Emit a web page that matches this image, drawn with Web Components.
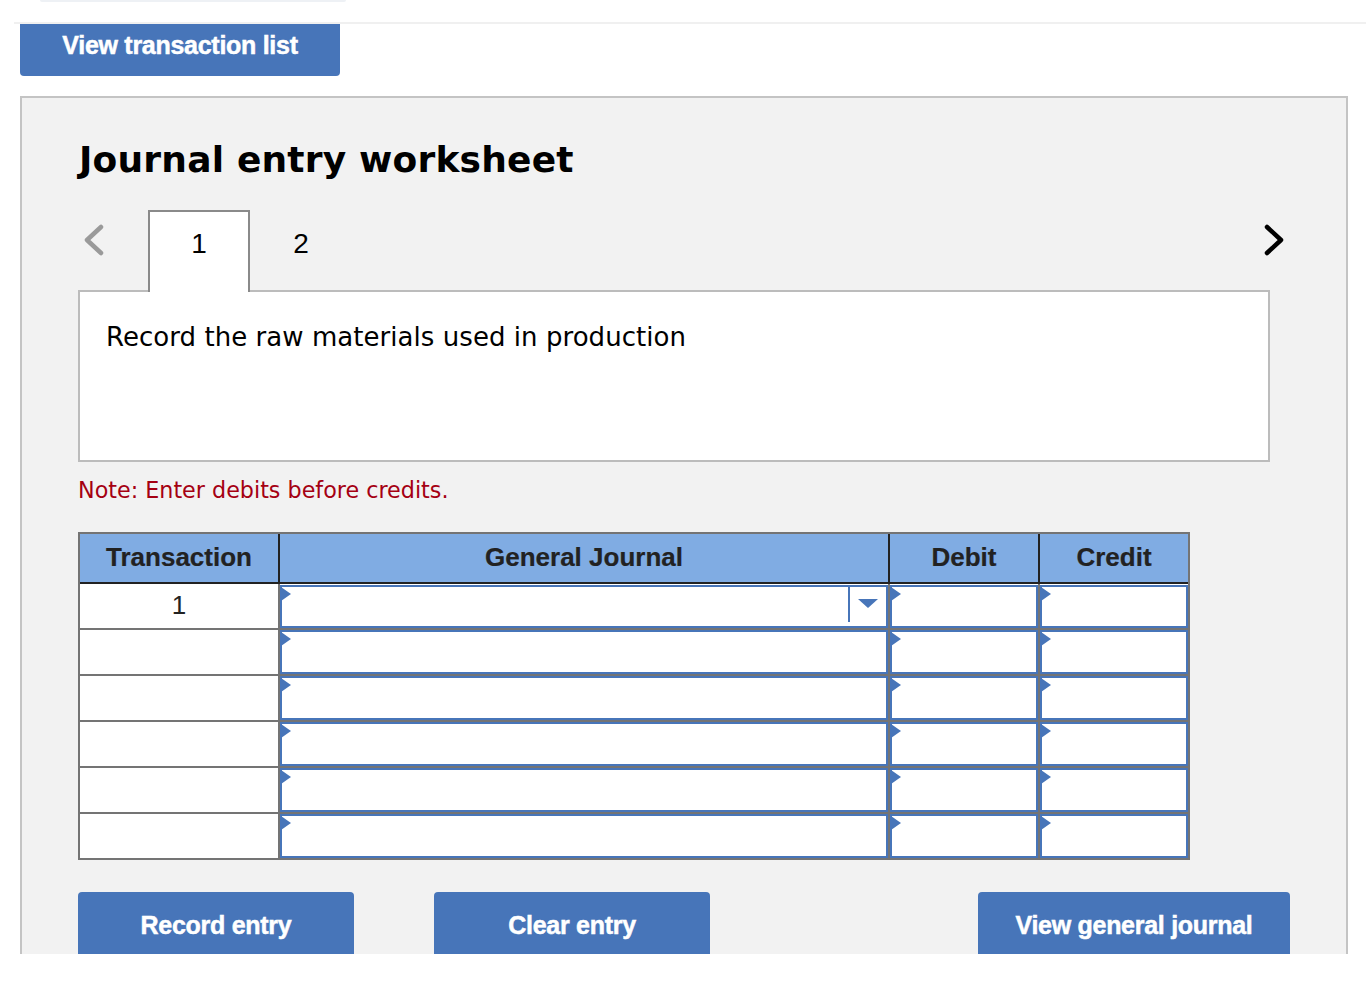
<!DOCTYPE html>
<html lang="en">
<head>
<meta charset="utf-8">
<title>Journal entry worksheet</title>
<style>
    html, body {
        margin: 0;
        background: #fff;
    }
</style>
</head>
<body>
<worksheet-page></worksheet-page>
<script>
class ActionButton extends HTMLElement {
    constructor() {
        super();
        this.attachShadow({ mode: 'open' });
    }

    connectedCallback() {
        this.shadowRoot.innerHTML = `
        <style>
            :host {
                display: block;
                box-sizing: border-box;
                height: 66px;
                background: #4775b9;
                border-radius: 4px;
                color: #fff;
                font: bold 25px/66px "Liberation Sans", Arial, sans-serif;
                letter-spacing: -0.28px;
                text-align: center;
                -webkit-text-stroke: 0.5px #fff;
            }
        </style>
        <slot></slot>
        `;
    }
}

class TabStrip extends HTMLElement {
    constructor() {
        super();
        this.attachShadow({ mode: 'open' });
    }

    connectedCallback() {
        this.shadowRoot.innerHTML = `
        <style>
            :host {
                display: flex;
                height: 80px;
                width: 1212px;
            }

            .arrow {
                width: 70px;
                height: 60px;
                flex: none;
            }

            .arrow svg {
                display: block;
            }

            .next {
                width: 30px;
                margin-left: auto;
            }

            .tab {
                box-sizing: border-box;
                width: 102px;
                height: 82px;
                padding-top: 14px;
                border: 2px solid transparent;
                border-bottom: 0;
                font: 28px/36px "Liberation Sans", Arial, sans-serif;
                color: #000;
                text-align: center;
            }

            .tab.active {
                position: relative;
                z-index: 1;
                background: #fff;
                border-color: #8a8a8a;
            }
        </style>
        <div class="arrow">
            <svg width="70" height="60" viewBox="0 0 70 60">
                <path d="M23 17 L9 30 L23 43" fill="none" stroke="#9a9a9a" stroke-width="4.5" stroke-linecap="round" stroke-linejoin="round"/>
            </svg>
        </div>
        <div class="tab active">1</div>
        <div class="tab">2</div>
        <div class="arrow next">
            <svg width="30" height="60" viewBox="0 0 30 60">
                <path d="M7 17 L21 30 L7 43" fill="none" stroke="#000" stroke-width="4.5" stroke-linecap="round" stroke-linejoin="round"/>
            </svg>
        </div>
        `;
    }
}

class EntryCell extends HTMLElement {
    constructor() {
        super();
        this.attachShadow({ mode: 'open' });
    }

    connectedCallback() {
        const hasMenu = this.hasAttribute('menu');

        this.shadowRoot.innerHTML = `
        <style>
            :host {
                display: block;
                box-sizing: border-box;
                background: #fff;
            }

            :host([first]) {
                padding-top: 1px;
            }

            .field {
                position: relative;
                box-sizing: border-box;
                height: 100%;
                background: #fff;
                border: 2px solid #4775b9;
            }

            .flag {
                position: absolute;
                left: -1px;
                top: 0;
                display: block;
            }

            .menu {
                position: absolute;
                right: 7px;
                top: -1px;
                bottom: 4px;
                width: 29px;
                border-left: 2px solid #4775b9;
            }

            .menu::after {
                content: "";
                position: absolute;
                left: 8px;
                top: 13px;
                border-left: 10px solid transparent;
                border-right: 10px solid transparent;
                border-top: 9px solid #4775b9;
            }
        </style>
        <div class="field">
            <svg class="flag" width="10" height="14" viewBox="0 0 10 14">
                <path d="M0 0 L10 7 L0 14 Z" fill="#4775b9"/>
            </svg>
            ${hasMenu ? '<div class="menu"></div>' : ''}
        </div>
        `;
    }
}

class JournalTable extends HTMLElement {
    constructor() {
        super();
        this.attachShadow({ mode: 'open' });
    }

    connectedCallback() {
        const rows = ['1', '', '', '', '', ''];

        this.shadowRoot.innerHTML = `
        <style>
            :host {
                display: block;
                box-sizing: border-box;
                width: 1112px;
                border: 2px solid #747474;
                background: #747474;
            }

            .grid {
                display: grid;
                grid-template-columns: 198px 608px 148px 148px;
                column-gap: 2px;
            }

            .head {
                background: #222;
                padding-bottom: 2px;
            }

            .head div {
                height: 48px;
                background: #80ace3;
                color: #222;
                font: bold 26px/46px "Liberation Sans", Arial, sans-serif;
                text-align: center;
                -webkit-text-stroke: 0.2px #222;
            }

            .body {
                grid-auto-rows: 44px;
                row-gap: 2px;
            }

            .num {
                background: #fff;
                color: #222;
                font: 26px/42px "Liberation Sans", Arial, sans-serif;
                text-align: center;
            }
        </style>
        <div class="grid head">
            <div>Transaction</div>
            <div>General Journal</div>
            <div>Debit</div>
            <div>Credit</div>
        </div>
        <div class="grid body">
            ${rows.map((num, i) => `
                <div class="num">${num}</div>
                <entry-cell ${i === 0 ? 'first menu' : ''}></entry-cell>
                <entry-cell ${i === 0 ? 'first' : ''}></entry-cell>
                <entry-cell ${i === 0 ? 'first' : ''}></entry-cell>
            `).join('')}
        </div>
        `;
    }
}

class WorksheetPanel extends HTMLElement {
    constructor() {
        super();
        this.attachShadow({ mode: 'open' });
    }

    connectedCallback() {
        this.shadowRoot.innerHTML = `
        <style>
            :host {
                display: block;
                box-sizing: border-box;
                margin: 20px 18px 0 20px;
                padding: 43px 56px 40px;
                border: 2px solid #c4c4c4;
                background: #f2f2f2;
                font-family: "DejaVu Sans", Verdana, sans-serif;
            }

            h2 {
                margin: 0 0 31px 1px;
                font-size: 36px;
                line-height: 38px;
                font-weight: bold;
                letter-spacing: 0.2px;
                color: #000;
            }

            .prompt {
                box-sizing: border-box;
                width: 1192px;
                height: 172px;
                padding: 28px 26px;
                background: #fff;
                border: 2px solid #bcbcbc;
                font-size: 26px;
                line-height: 34px;
                letter-spacing: 0.05px;
                color: #000;
            }

            .note {
                margin: 14px 0 28px;
                font-size: 22.25px;
                line-height: 28px;
                color: #a50012;
            }

            .actions {
                display: flex;
                width: 1212px;
                margin-top: 32px;
                gap: 80px;
            }

            .actions action-button {
                width: 276px;
            }

            .actions action-button:last-child {
                width: 312px;
                margin-left: auto;
            }
        </style>
        <h2>Journal entry worksheet</h2>
        <tab-strip></tab-strip>
        <div class="prompt">Record the raw materials used in production</div>
        <div class="note">Note: Enter debits before credits.</div>
        <journal-table></journal-table>
        <div class="actions">
            <action-button>Record entry</action-button>
            <action-button>Clear entry</action-button>
            <action-button>View general journal</action-button>
        </div>
        `;
    }
}

class WorksheetPage extends HTMLElement {
    constructor() {
        super();
        this.attachShadow({ mode: 'open' });
    }

    connectedCallback() {
        this.shadowRoot.innerHTML = `
        <style>
            :host {
                display: block;
                height: 954px;
                overflow: hidden;
                background: #fff;
            }

            .sliver {
                box-sizing: border-box;
                width: 306px;
                height: 2px;
                margin-left: 40px;
                background: #eef1f5;
                border-radius: 0 0 4px 4px;
            }

            .rule {
                height: 2px;
                margin: 20px 0 0 14px;
                background: #f0f0f0;
            }

            .top-button {
                width: 320px;
                height: 52px;
                margin-left: 20px;
                overflow: hidden;
                background: #4775b9;
                border-radius: 0 0 4px 4px;
            }

            .top-button action-button {
                height: 42px;
                line-height: 42px;
                background: none;
            }
        </style>
        <div class="sliver"></div>
        <div class="rule"></div>
        <div class="top-button"><action-button>View transaction list</action-button></div>
        <worksheet-panel></worksheet-panel>
        `;
    }
}

customElements.define('action-button', ActionButton);
customElements.define('tab-strip', TabStrip);
customElements.define('entry-cell', EntryCell);
customElements.define('journal-table', JournalTable);
customElements.define('worksheet-panel', WorksheetPanel);
customElements.define('worksheet-page', WorksheetPage);
</script>
</body>
</html>
